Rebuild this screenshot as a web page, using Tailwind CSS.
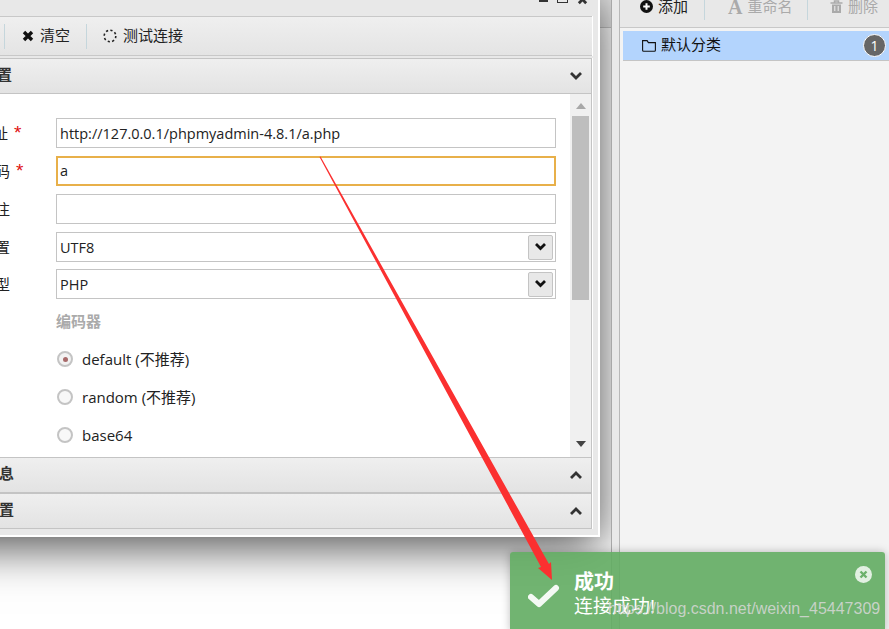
<!DOCTYPE html>
<html lang="zh-CN">
<head>
<meta charset="UTF-8">
<title>编辑数据</title>
<script src="https://cdn.jsdelivr.net/npm/@tailwindcss/browser@4"></script>
</head>
<body class="bg-white">
<div class="relative flex w-[889px] h-[629px] overflow-hidden text-[15px] text-[#222] font-['Open_Sans','Noto_Sans_CJK_SC',sans-serif]">

  <!-- left layout panel -->
  <div class="relative w-[612px] h-full overflow-hidden bg-white border-r border-[#a8a8a8]">
    <div class="h-[28px] bg-[#e8e8e8] border-b border-[#c8c8c8]"></div>
    <!-- window -->
    <div class="absolute left-[-100px] top-[-12px] w-[700px] h-[549px] flex flex-col bg-[#e8e8e8] border-r-2 border-b-2 border-white pr-[6px] shadow-[0_10px_45px_rgba(0,0,0,0.7)]">
      <div class="h-[28px] shrink-0 flex justify-end items-start gap-[9px] pr-[4px] pt-[6px] text-[#333]">
        <span class="w-[9px] h-[3px] mt-[5px] bg-[#333]"></span>
        <span class="w-[11px] h-[9px] border border-[#333]"></span>
        <svg class="w-[11px] h-[11px]" viewBox="0 0 12 12"><path d="M2 2l8 8M10 2l-8 8" stroke="#333" stroke-width="3"/></svg>
      </div>

      <!-- toolbar -->
      <div class="h-[40px] shrink-0 flex items-center border-y border-[#c8c8c8] border-r-[#c8c8c8] bg-gradient-to-b from-[#efefef] to-[#e4e4e4] shadow-[1px_0_0_#fff]">
        <span class="w-[105px] h-[25px] border-r border-[#c5d6dc]"></span>
        <div class="w-[81px] flex items-center gap-[6px] pl-[17px]">
          <svg class="w-[12px] h-[12px]" viewBox="0 0 12 12"><path d="M2 2l8 8M10 2l-8 8" stroke="#111" stroke-width="3.4"/></svg>
          <span class="mb-[2px]">清空</span>
        </div>
        <span class="h-[25px] border-r border-[#c5d6dc]"></span>
        <div class="flex items-center gap-[6px] pl-[16px]">
          <svg class="w-[14px] h-[14px]" viewBox="0 0 14 14"><circle cx="7" cy="7" r="5.8" fill="none" stroke="#222" stroke-width="1.6" stroke-dasharray="2.2 2.3"/></svg>
          <span class="mb-[2px]">测试连接</span>
        </div>
      </div>

      <!-- section: base config -->
      <div class="mt-[2px] h-[36px] shrink-0 flex items-center justify-between pl-[52px] pr-[8px] border border-l-0 border-[#c4c4c4] bg-gradient-to-b from-[#efefef] to-[#e3e3e3] shadow-[1px_0_0_#fff] font-bold text-[#333]">
        <span class="mb-[3px]">基础配置</span>
        <svg class="w-[14px] h-[10px]" viewBox="0 0 14 10"><path d="M2 2l5 5 5-5" fill="none" stroke="#333" stroke-width="2.8"/></svg>
      </div>

      <div class="h-[363px] shrink-0 flex bg-white border-r border-[#c4c4c4] shadow-[1px_0_0_#fff] overflow-hidden">
        <div class="w-[670px] pl-[50px] pt-[24px]">
          <div class="flex h-[30px] items-center mb-[8px]">
            <label class="w-[106px] shrink-0">URL地址<span class="ml-[6px] text-[19px] leading-none text-[#e01010] font-['Liberation_Sans',sans-serif]">*</span></label>
            <div class="w-[500px] h-[30px] pl-[3px] pt-[1px] flex items-center border border-[#c4c4c4] text-[14.5px]">http://127.0.0.1/phpmyadmin-4.8.1/a.php</div>
          </div>
          <div class="flex h-[30px] items-center mb-[8px]">
            <label class="w-[106px] shrink-0">连接密码<span class="ml-[6px] text-[19px] leading-none text-[#e01010] font-['Liberation_Sans',sans-serif]">*</span></label>
            <div class="w-[500px] h-[30px] pl-[2px] flex items-center border-2 border-[#e8b04a] text-[14.5px]">a</div>
          </div>
          <div class="flex h-[30px] items-center mb-[8px]">
            <label class="w-[106px] shrink-0">网站备注</label>
            <div class="w-[500px] h-[30px] border border-[#c4c4c4]"></div>
          </div>
          <div class="flex h-[30px] items-center mb-[7px]">
            <label class="w-[106px] shrink-0">编码设置</label>
            <div class="w-[500px] h-[30px] pl-[3px] pr-[2px] flex items-center justify-between border border-[#c4c4c4] text-[14.5px]">
              <span class="mt-[1px]">UTF8</span>
              <span class="w-[25px] h-[25px] flex items-center justify-center rounded-[2px] border border-[#c4c4c4] bg-[#e8e8e8]">
                <svg class="w-[13px] h-[10px]" viewBox="0 0 13 10"><path d="M2 2l4.5 4.5L11 2" fill="none" stroke="#111" stroke-width="2.8"/></svg>
              </span>
            </div>
          </div>
          <div class="flex h-[30px] items-center">
            <label class="w-[106px] shrink-0">连接类型</label>
            <div class="w-[500px] h-[30px] pl-[3px] pr-[2px] flex items-center justify-between border border-[#c4c4c4] text-[14.5px]">
              <span class="mt-[1px]">PHP</span>
              <span class="w-[25px] h-[25px] flex items-center justify-center rounded-[2px] border border-[#c4c4c4] bg-[#e8e8e8]">
                <svg class="w-[13px] h-[10px]" viewBox="0 0 13 10"><path d="M2 2l4.5 4.5L11 2" fill="none" stroke="#111" stroke-width="2.8"/></svg>
              </span>
            </div>
          </div>

          <div class="pl-[106px]">
            <div class="mt-[12px] h-[20px] flex items-center font-bold text-[#aaa]">编码器</div>
            <div class="mt-[18px] h-[20px] flex items-center gap-[9px]">
              <span class="w-[16px] h-[16px] ml-[1px] rounded-full border-2 border-[#c4c4c4] bg-[#f2f2f2] flex items-center justify-center"><span class="w-[5px] h-[5px] rounded-full bg-[#a86a6a]"></span></span>
              <span>default (不推荐)</span>
            </div>
            <div class="mt-[18px] h-[20px] flex items-center gap-[9px]">
              <span class="w-[16px] h-[16px] ml-[1px] rounded-full border-2 border-[#c4c4c4] bg-[#f8f8f8]"></span>
              <span>random (不推荐)</span>
            </div>
            <div class="mt-[18px] h-[20px] flex items-center gap-[9px]">
              <span class="w-[16px] h-[16px] ml-[1px] rounded-full border-2 border-[#c4c4c4] bg-[#f8f8f8]"></span>
              <span>base64</span>
            </div>
          </div>
        </div>

        <!-- scrollbar -->
        <div class="w-[21px] h-full flex flex-col items-center bg-[#f0f0f0]">
          <svg class="w-[10px] h-[6px] mt-[9px] shrink-0" viewBox="0 0 10 6"><path d="M0 6l5-6 5 6z" fill="#a8a8a8"/></svg>
          <div class="w-[17px] h-[184px] mt-[7px] shrink-0 bg-[#bebebe]"></div>
          <svg class="w-[10px] h-[6px] mt-[141px] shrink-0" viewBox="0 0 10 6"><path d="M0 0l5 6 5-6z" fill="#444"/></svg>
        </div>
      </div>

      <!-- collapsed sections -->
      <div class="h-[36px] shrink-0 flex items-center justify-between pl-[54px] pr-[8px] border border-l-0 border-[#c4c4c4] bg-gradient-to-b from-[#efefef] to-[#e3e3e3] shadow-[1px_0_0_#fff] font-bold text-[#333]">
        <span class="mb-[3px]">请求信息</span>
        <svg class="w-[14px] h-[10px]" viewBox="0 0 14 10"><path d="M2 8l5-5 5 5" fill="none" stroke="#333" stroke-width="2.8"/></svg>
      </div>
      <div class="h-[36px] shrink-0 flex items-center justify-between pl-[54px] pr-[8px] border border-l-0 border-[#c4c4c4] bg-gradient-to-b from-[#efefef] to-[#e3e3e3] shadow-[1px_0_0_#fff] font-bold text-[#333]">
        <span class="mb-[3px]">其他设置</span>
        <svg class="w-[14px] h-[10px]" viewBox="0 0 14 10"><path d="M2 8l5-5 5 5" fill="none" stroke="#333" stroke-width="2.8"/></svg>
      </div>
    </div>
  </div>

  <!-- splitter -->
  <div class="w-[8px] h-full bg-[#e9e9e9] border-r border-[#b8b8b8]"></div>

  <!-- right panel -->
  <div class="flex-1 h-full bg-[#f3f3f3]">
    <div class="h-[28px] flex bg-[#e8e8e8] border-b border-[#c8c8c8] pb-[7px]">
      <div class="w-[85px] h-full flex items-center gap-[5px] pl-[20px] pb-[7px] border-r border-[#c5d6dc]">
        <svg class="w-[13px] h-[13px]" viewBox="0 0 13 13"><circle cx="6.5" cy="6.5" r="6.5" fill="#111"/><path d="M6.5 3.2v6.6M3.2 6.5h6.6" stroke="#fff" stroke-width="2"/></svg>
        <span>添加</span>
      </div>
      <div class="w-[103px] h-full flex items-center gap-[5px] pl-[23px] pb-[7px] border-r border-[#c5d6dc] text-[#aaa]">
        <span class="text-[20px] font-bold font-['Liberation_Serif',serif] leading-none">A</span>
        <span>重命名</span>
      </div>
      <div class="h-full flex items-center gap-[5px] pl-[22px] pb-[7px] text-[#aaa]">
        <svg class="w-[13px] h-[13px]" viewBox="0 0 13 13"><path d="M0.5 3h12M4.5 3V1h4v2" fill="none" stroke="#aaa" stroke-width="1.5"/><path d="M2 4.5h9V13H2z" fill="#aaa"/><path d="M4.8 6v5M8.2 6v5" stroke="#f0f0f0"/></svg>
        <span>删除</span>
      </div>
    </div>
    <div class="mt-[3px] ml-[3px] h-[30px] flex items-center justify-between bg-[#b3d4fd] border-b border-[#c4c4c4] pl-[19px] pr-[3px]">
      <div class="flex items-center gap-[5px] text-[#111]">
        <svg class="w-[14px] h-[13px]" viewBox="0 0 14 13"><path d="M0.6 11.2V1.6h4.5l1.3 2h7v7.6a1 1 0 0 1-1 1H1.6a1 1 0 0 1-1-1z" fill="none" stroke="#111" stroke-width="1.1"/></svg>
        <span class="mb-[2px]">默认分类</span>
      </div>
      <span class="w-[23px] h-[23px] rounded-full bg-[#666] border border-white text-white text-[14px] flex items-center justify-center">1</span>
    </div>
  </div>

  <!-- toast -->
  <div class="absolute left-[510px] top-[552px] w-[375px] h-[80px] rounded-[3px] bg-[#62ac62]/90 shadow-[0_0_8px_rgba(0,0,0,0.25)] flex items-start text-white">
    <svg class="ml-[18px] mt-[32px] w-[32px] h-[24px] shrink-0" viewBox="0 0 32 24"><path d="M3 13l8 7L28 4" fill="none" stroke="#fff" stroke-opacity="0.92" stroke-width="6" stroke-linecap="round" stroke-linejoin="round"/></svg>
    <div class="ml-[14px] mt-[18px] flex-1">
      <div class="text-[20px] leading-[24px] font-bold">成功</div>
      <div class="text-[19px] leading-[24px]">连接成功!</div>
    </div>
    <span class="mr-[13px] mt-[14px] w-[17px] h-[17px] rounded-full bg-white/80 flex items-center justify-center">
      <svg class="w-[9px] h-[9px]" viewBox="0 0 9 9"><path d="M1.5 1.5l6 6M7.5 1.5l-6 6" stroke="#6cb16c" stroke-width="2.4"/></svg>
    </span>
  </div>

  <!-- annotation arrow -->
  <svg class="absolute inset-0 w-[889px] h-[629px] pointer-events-none" viewBox="0 0 889 629">
    <path d="M319.5 157L320.5 156.6L549 564L551 562L552 580L538 568L541 567Z" fill="#fb3030"/>
  </svg>

  <!-- watermark -->
  <div class="absolute left-[608px] top-[599px] text-[16px] leading-[20px] text-[#d8d8d8]/85 font-['Liberation_Sans',sans-serif]">https://blog.csdn.net/weixin_45447309</div>
</div>
</body>
</html>
